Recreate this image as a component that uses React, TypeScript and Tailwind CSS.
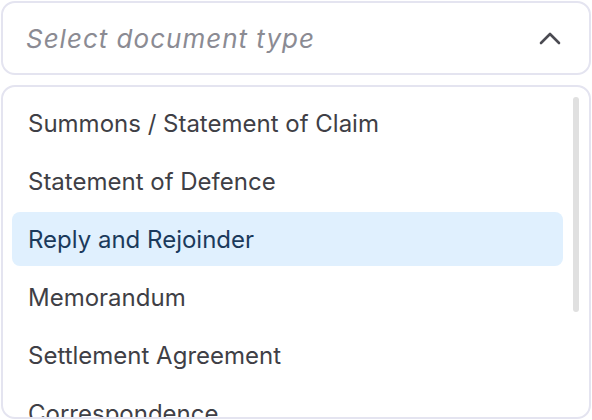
import React from 'react';

const options = [
  'Summons / Statement of Claim',
  'Statement of Defence',
  'Reply and Rejoinder',
  'Memorandum',
  'Settlement Agreement',
  'Correspondence',
  'Expert Report',
];

export default function App() {
  const selected = 'Reply and Rejoinder';

  return (
    <div className="w-[592px] h-[420px] bg-white p-px font-['Inter',sans-serif] overflow-hidden">
      {/* trigger */}
      <button className="w-full h-[74px] flex items-center justify-between pl-[23px] pr-[28px] border-2 border-[#e4e4f0] rounded-[14px] bg-white">
        <span className="text-[26px] italic text-[#8b8b93] tracking-[1px]">Select document type</span>
        <svg width="22" height="14" viewBox="0 0 22 14" fill="none">
          <path d="M2 12L11 3L20 12" stroke="#4b4b52" strokeWidth="2.6" strokeLinecap="round" strokeLinejoin="round" />
        </svg>
      </button>

      {/* list */}
      <div className="relative mt-[10px] h-[334px] border-2 border-[#e4e4f0] rounded-[14px] bg-white overflow-hidden">
        <ul className="flex flex-col gap-1 pl-[9px] pr-[26px] pt-[9px]">
          {options.map((o) => (
            <li
              key={o}
              className={`h-[54px] shrink-0 flex items-center pl-[16px] pr-4 pt-px rounded-[8px] text-[24px] ${
                o === selected ? 'bg-[#e0f0fe] text-[#1b3a5c]' : 'text-[#3f3f46]'
              }`}
            >
              {o}
            </li>
          ))}
        </ul>
        <div className="absolute right-[10px] top-[10px] w-[6px] h-[215px] rounded-full bg-[#e0e0e0]" />
      </div>
    </div>
  );
}
